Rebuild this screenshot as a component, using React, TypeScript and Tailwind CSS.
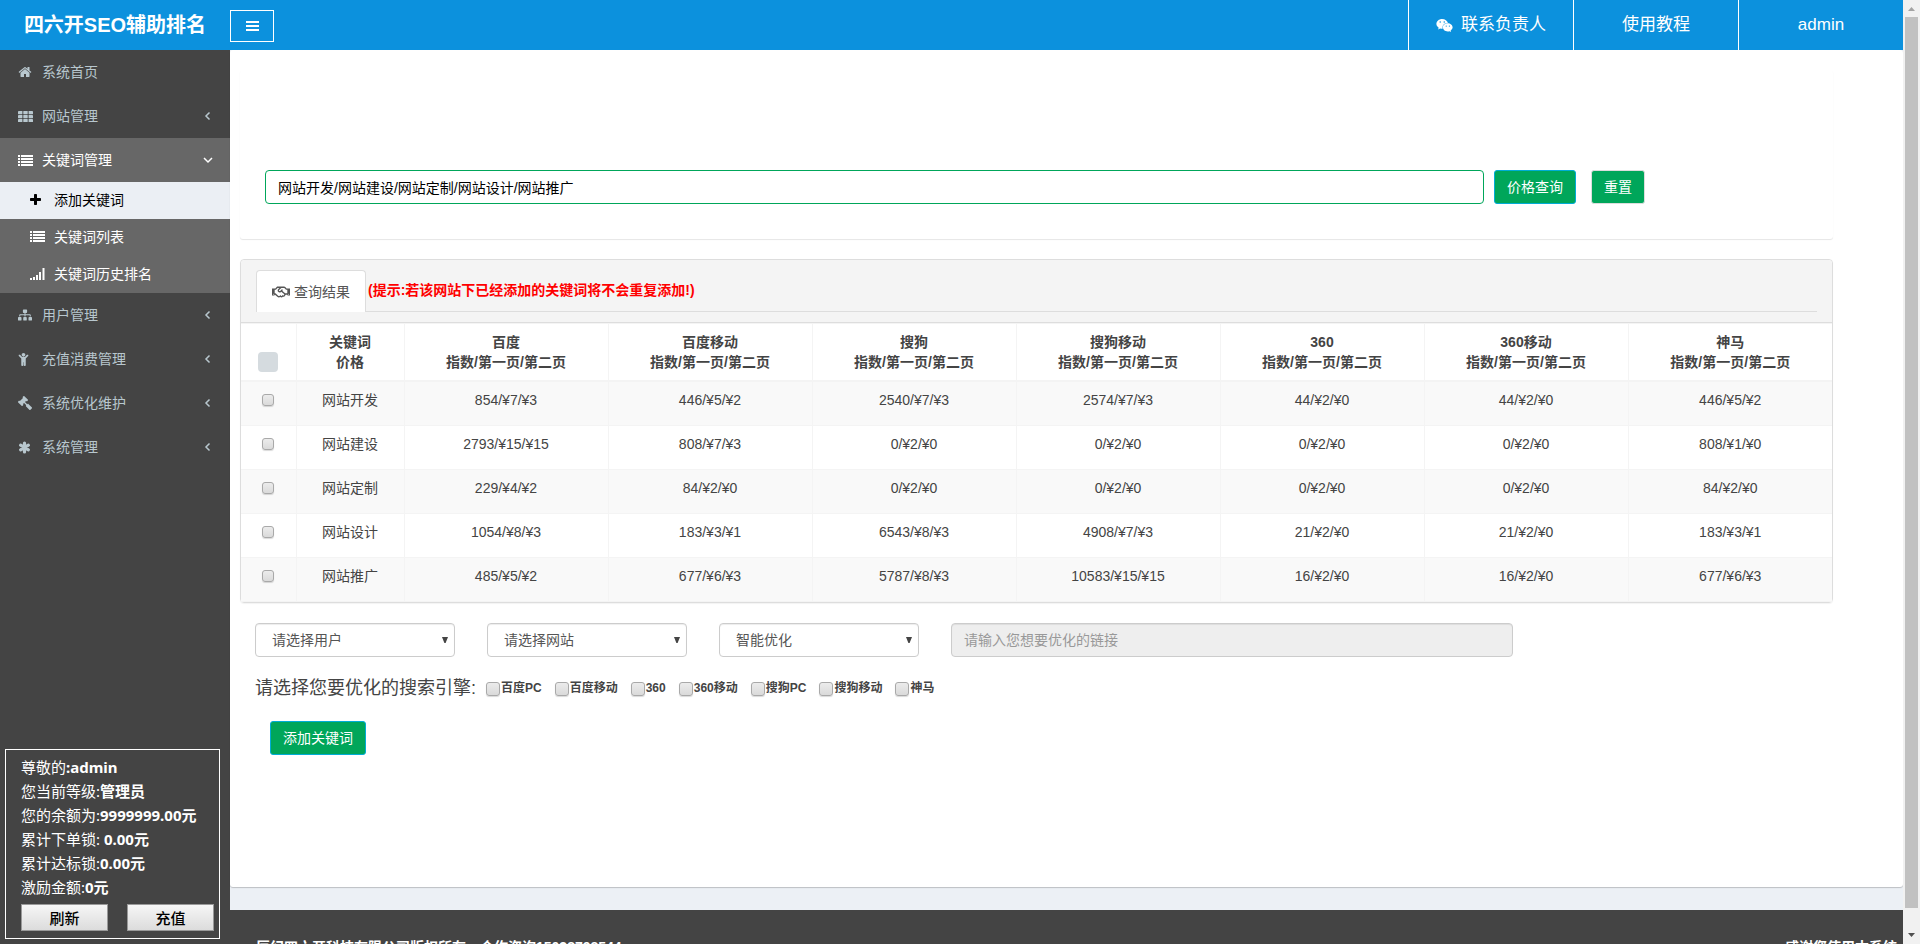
import { useState } from 'react'
import type { ReactNode } from 'react'
import { FaChild, FaGavel, FaRegHandshake, FaSitemap, FaWeixin } from 'react-icons/fa'

const columnas = ['百度', '百度移动', '搜狗', '搜狗移动', '360', '360移动', '神马']

const filas = [
  {
    palabra: '网站开发',
    precios: ['854/¥7/¥3', '446/¥5/¥2', '2540/¥7/¥3', '2574/¥7/¥3', '44/¥2/¥0', '44/¥2/¥0', '446/¥5/¥2'],
  },
  {
    palabra: '网站建设',
    precios: ['2793/¥15/¥15', '808/¥7/¥3', '0/¥2/¥0', '0/¥2/¥0', '0/¥2/¥0', '0/¥2/¥0', '808/¥1/¥0'],
  },
  {
    palabra: '网站定制',
    precios: ['229/¥4/¥2', '84/¥2/¥0', '0/¥2/¥0', '0/¥2/¥0', '0/¥2/¥0', '0/¥2/¥0', '84/¥2/¥0'],
  },
  {
    palabra: '网站设计',
    precios: ['1054/¥8/¥3', '183/¥3/¥1', '6543/¥8/¥3', '4908/¥7/¥3', '21/¥2/¥0', '21/¥2/¥0', '183/¥3/¥1'],
  },
  {
    palabra: '网站推广',
    precios: ['485/¥5/¥2', '677/¥6/¥3', '5787/¥8/¥3', '10583/¥15/¥15', '16/¥2/¥0', '16/¥2/¥0', '677/¥6/¥3'],
  },
]

const buscadores = ['百度PC', '百度移动', '360', '360移动', '搜狗PC', '搜狗移动', '神马']

const casilla =
  'appearance-none border border-[#a9a9a9] rounded-[3px] bg-linear-to-b from-[#ececec] to-[#dadada] shadow-[0_1px_1px_rgba(0,0,0,0.15)] checked:from-[#0c91dd] checked:to-[#0c91dd]'

function IconoCasa() {
  return (
    <svg width="14" height="14" viewBox="0 0 1792 1792" fill="currentColor">
      <path d="M1472 992v480q0 26-19 45t-45 19h-384v-384h-256v384h-384q-26 0-45-19t-19-45v-480q0-1 .5-3t.5-3l575-474 575 474q1 2 1 6zm223-69l-62 74q-8 9-21 11h-3q-13 0-21-7l-692-577-692 577q-12 8-24 7-13-2-21-11l-62-74q-8-10-7-23.5t11-21.5l719-599q32-26 76-26t76 26l244 204v-195q0-14 9-23t23-9h192q14 0 23 9t9 23v408l219 182q10 8 11 21.5t-7 23.5z" />
    </svg>
  )
}

function IconoCuadricula() {
  return (
    <svg width="15" height="11" viewBox="0 0 15 11" fill="currentColor">
      {[0, 4, 8].map((y) =>
        [0, 5.3, 10.6].map((x) => <rect key={`${x}-${y}`} x={x} y={y} width="4.4" height="3.2" rx="0.4" />)
      )}
    </svg>
  )
}

function IconoLista() {
  return (
    <svg width="15" height="11" viewBox="0 0 15 11" fill="currentColor">
      {[0, 3, 6, 9].map((y) => (
        <g key={y}>
          <rect x="0" y={y} width="2" height="2" />
          <rect x="3" y={y} width="12" height="2" />
        </g>
      ))}
    </svg>
  )
}

function IconoMas() {
  return (
    <svg width="11" height="11" viewBox="0 0 11 11" fill="currentColor">
      <rect x="0" y="4" width="11" height="3" rx="0.7" />
      <rect x="4" y="0" width="3" height="11" rx="0.7" />
    </svg>
  )
}

function IconoSenal() {
  return (
    <svg width="15" height="12" viewBox="0 0 15 12" fill="currentColor">
      <rect x="0" y="10" width="2" height="2" />
      <rect x="3" y="9" width="2" height="3" />
      <rect x="6" y="7" width="2" height="5" />
      <rect x="9" y="4" width="2" height="8" />
      <rect x="12.5" y="0" width="2" height="12" />
    </svg>
  )
}

function IconoAsterisco() {
  return (
    <svg width="13" height="13" viewBox="0 0 13 13" stroke="currentColor" strokeWidth="3.2" strokeLinecap="round">
      <path d="M6.5 2v9M2.6 4.2l7.8 4.6M10.4 4.2l-7.8 4.6" />
    </svg>
  )
}

function Flecha({ abierta = false }: { abierta?: boolean }) {
  return (
    <svg width="12" height="12" viewBox="0 0 12 12" fill="none" stroke="currentColor" strokeWidth="1.5">
      <path d={abierta ? 'M2 4l4 4 4-4' : 'M7.5 2.5L4 6l3.5 3.5'} />
    </svg>
  )
}

function ItemMenu({ icono, texto, flecha = true }: { icono: ReactNode; texto: string; flecha?: boolean }) {
  return (
    <li>
      <a href="#" className="flex items-center h-11 pl-[18px] pr-4 text-[#b8c7ce] hover:text-white">
        <span className="w-6">{icono}</span>
        <span className="flex-1">{texto}</span>
        {flecha && <Flecha />}
      </a>
    </li>
  )
}

function SubItem({ icono, texto, activo = false }: { icono: ReactNode; texto: string; activo?: boolean }) {
  return (
    <li>
      <a
        href="#"
        className={`flex items-center h-[37px] pb-[2px] pl-[30px] ${activo ? 'bg-[#ebeff4] text-black' : 'text-white'}`}
      >
        <span className="w-6">{icono}</span>
        {texto}
      </a>
    </li>
  )
}

function Selector({ etiqueta, opciones }: { etiqueta: string; opciones: string[] }) {
  return (
    <div className="relative w-[200px]">
      <select
        aria-label={etiqueta}
        className="appearance-none w-full h-[34px] pl-4 pr-6 border border-[#ccc] rounded bg-white text-[#555] shadow-[inset_0_1px_1px_rgba(0,0,0,0.075)]"
      >
        {opciones.map((opcion) => (
          <option key={opcion}>{opcion}</option>
        ))}
      </select>
      <svg
        className="absolute right-[7px] top-[14px] pointer-events-none"
        width="6"
        height="6"
        viewBox="0 0 6 6"
        fill="#444"
      >
        <path d="M0 0h6L3.6 6H2.4z" />
      </svg>
    </div>
  )
}

export default function App() {
  const [palabras, setPalabras] = useState('网站开发/网站建设/网站定制/网站设计/网站推广')
  const [marcadas, setMarcadas] = useState<string[]>([])

  const todas = marcadas.length === filas.length

  function alternar(palabra: string) {
    if (marcadas.includes(palabra)) {
      setMarcadas(marcadas.filter((p) => p !== palabra))
      return
    }

    setMarcadas([...marcadas, palabra])
  }

  return (
    <div className="flex h-screen overflow-hidden bg-[#444] text-sm text-[#444] font-['Liberation_Sans','Noto_Sans_CJK_SC',sans-serif]">
      <div className="flex flex-col flex-1 min-w-0">
        <header className="flex shrink-0 h-[50px] bg-[#0c91dd] text-white">
          <a href="#" className="w-[230px] text-center text-xl font-bold leading-[50px]">
            四六开SEO辅助排名
          </a>

          <button
            aria-label="菜单"
            className="flex items-center justify-center w-11 h-8 mt-[10px] border border-white"
          >
            <svg width="13" height="10" viewBox="0 0 13 10" fill="currentColor">
              <rect y="0" width="13" height="2" />
              <rect y="4" width="13" height="2" />
              <rect y="8" width="13" height="2" />
            </svg>
          </button>

          <nav className="flex ml-auto text-[17px]">
            <a href="#" className="flex items-center justify-center gap-2 w-[165px] border-l border-white">
              <FaWeixin size={17} />
              联系负责人
            </a>
            <a href="#" className="flex items-center justify-center w-[165px] border-l border-white">
              使用教程
            </a>
            <a href="#" className="flex items-center justify-center w-[165px] border-l border-white">
              admin
            </a>
          </nav>
        </header>

        <div className="flex flex-1 min-h-0">
          <aside className="flex flex-col shrink-0 w-[230px] bg-[#444]">
            <ul>
              <ItemMenu icono={<IconoCasa />} texto="系统首页" flecha={false} />
              <ItemMenu icono={<IconoCuadricula />} texto="网站管理" />

              <li className="bg-[#676767]">
                <a href="#" className="flex items-center h-11 pl-[18px] pr-4 text-white">
                  <span className="w-6">
                    <IconoLista />
                  </span>
                  <span className="flex-1">关键词管理</span>
                  <Flecha abierta />
                </a>

                <ul>
                  <SubItem icono={<IconoMas />} texto="添加关键词" activo />
                  <SubItem icono={<IconoLista />} texto="关键词列表" />
                  <SubItem icono={<IconoSenal />} texto="关键词历史排名" />
                </ul>
              </li>

              <ItemMenu icono={<FaSitemap size={14} />} texto="用户管理" />
              <ItemMenu icono={<FaChild size={13} className="-ml-px" />} texto="充值消费管理" />
              <ItemMenu icono={<FaGavel size={14} className="-scale-x-100" />} texto="系统优化维护" />
              <ItemMenu icono={<IconoAsterisco />} texto="系统管理" />
            </ul>

            <section className="mt-auto mb-[5px] ml-[5px] w-[215px] pt-[5px] pb-[7px] pl-[15px] pr-[5px] border border-white text-white text-[15px] leading-6 font-['Noto_Sans','Noto_Sans_CJK_SC',sans-serif]">
              <p>
                尊敬的<b>:admin</b>
              </p>
              <p>
                您当前等级:<b>管理员</b>
              </p>
              <p>
                您的余额为:<b>9999999.00元</b>
              </p>
              <p>
                累计下单锁: <b>0.00元</b>
              </p>
              <p>
                累计达标锁:<b>0.00元</b>
              </p>
              <p>
                激励金额:<b>0元</b>
              </p>

              <div className="flex justify-between mt-[5px] text-black font-medium">
                <button className="w-[87px] h-[27px] border border-[#999] bg-linear-to-b from-[#f6f6f6] to-[#dcdcdc] leading-6">
                  刷新
                </button>
                <button className="w-[87px] h-[27px] border border-[#999] bg-linear-to-b from-[#f6f6f6] to-[#dcdcdc] leading-6">
                  充值
                </button>
              </div>
            </section>
          </aside>

          <main className="flex-1 min-w-0 bg-[#ecf0f5]">
            <div className="min-h-[837px] pt-5 pl-[10px] pr-[70px] rounded-[3px] bg-white shadow-[0_1px_1px_rgba(0,0,0,0.2)]">
              <form
                className="flex items-start pt-[100px] pb-[35px] pl-[25px] rounded-[3px] shadow-[0_1px_1px_rgba(0,0,0,0.1)]"
                onSubmit={(e) => e.preventDefault()}
              >
                <input
                  type="text"
                  aria-label="关键词"
                  value={palabras}
                  onChange={(e) => setPalabras(e.target.value)}
                  className="flex-1 h-[34px] px-3 border border-[#00a65a] rounded bg-white text-black focus:outline-none"
                />
                <button className="ml-[10px] h-[34px] px-3 border border-[#00acd6] rounded-[3px] bg-[#00a65a] text-white">
                  价格查询
                </button>
                <button
                  type="button"
                  onClick={() => setPalabras('')}
                  className="ml-[15px] mr-[188px] h-[34px] px-3 border border-[#ddd] rounded-[3px] bg-[#00a65a] text-white"
                >
                  重置
                </button>
              </form>

              <section className="mt-5 border border-[#ddd] rounded shadow-[0_1px_1px_rgba(0,0,0,0.05)]">
                <div className="px-[15px] py-[10px] border-b border-[#ddd] rounded-t bg-[#f4f4f4]">
                  <div className="flex border-b border-[#ddd]">
                    <a
                      href="#"
                      className="flex items-center gap-1 h-[42px] -mb-px px-[15px] border border-b-0 border-[#ddd] rounded-t bg-white text-[#555]"
                    >
                      <FaRegHandshake size={18} />
                      查询结果
                    </a>
                    <b className="ml-[2px] leading-10 text-[#f00]">
                      (提示:若该网站下已经添加的关键词将不会重复添加!)
                    </b>
                  </div>
                </div>

                <div className="border-t border-[#f4f4f4]">
                  <table className="w-full table-fixed border-collapse text-center leading-5">
                    <thead>
                      <tr className="border-b-2 border-[#f4f4f4]">
                        <th className="w-[55px] p-2 align-bottom">
                          <input
                            type="checkbox"
                            aria-label="全选"
                            checked={todas}
                            onChange={() => setMarcadas(todas ? [] : filas.map((f) => f.palabra))}
                            className="block mx-auto size-5 appearance-none rounded bg-[#d5dbdf] checked:bg-[#0c91dd]"
                          />
                        </th>
                        <th className="w-[108px] p-2 border-l border-[#f4f4f4]">
                          关键词
                          <br />
                          价格
                        </th>
                        {columnas.map((columna) => (
                          <th key={columna} className="p-2 border-l border-[#f4f4f4]">
                            {columna}
                            <br />
                            指数/第一页/第二页
                          </th>
                        ))}
                      </tr>
                    </thead>
                    <tbody>
                      {filas.map((fila) => (
                        <tr key={fila.palabra} className="h-11 align-top border-b border-[#f4f4f4] odd:bg-[#f9f9f9]">
                          <td className="px-2 py-3">
                            <input
                              type="checkbox"
                              aria-label={fila.palabra}
                              checked={marcadas.includes(fila.palabra)}
                              onChange={() => alternar(fila.palabra)}
                              className={`block mx-auto size-3 ${casilla}`}
                            />
                          </td>
                          <td className="p-2 border-l border-[#f4f4f4]">{fila.palabra}</td>
                          {fila.precios.map((precio, i) => (
                            <td key={columnas[i]} className="p-2 border-l border-[#f4f4f4]">
                              {precio}
                            </td>
                          ))}
                        </tr>
                      ))}
                    </tbody>
                  </table>
                </div>
              </section>

              <div className="flex gap-8 mt-5 pl-[15px]">
                <Selector etiqueta="用户" opciones={['请选择用户']} />
                <Selector etiqueta="网站" opciones={['请选择网站']} />
                <Selector etiqueta="优化方式" opciones={['智能优化']} />
                <input
                  type="text"
                  aria-label="链接"
                  disabled
                  placeholder="请输入您想要优化的链接"
                  className="w-[562px] h-[34px] px-3 border border-[#ccc] rounded bg-[#eee] placeholder:text-[#999] shadow-[inset_0_1px_1px_rgba(0,0,0,0.075)]"
                />
              </div>

              <div className="flex items-center mt-4 pl-[15px] leading-[30px]">
                <h4 className="mr-[10px] text-lg leading-[30px]">请选择您要优化的搜索引擎:</h4>
                <div className="flex gap-[13px]">
                  {buscadores.map((buscador) => (
                    <label key={buscador} className="flex items-center gap-px text-xs leading-[30px] font-bold">
                      <input type="checkbox" className={`size-[14px] mt-[2px] ${casilla}`} />
                      {buscador}
                    </label>
                  ))}
                </div>
              </div>

              <button className="block mt-[18px] ml-[30px] h-[34px] px-3 border border-[#00acd6] rounded-[3px] bg-[#00a65a] text-white">
                添加关键词
              </button>
            </div>

            <footer className="flex justify-between mt-[23px] pt-[27px] pl-[26px] pr-[6px] bg-[#444] text-white font-bold leading-5">
              <span>辰纪四六开科技有限公司版权所有，合作咨询15038798544</span>
              <span>感谢您使用本系统</span>
            </footer>
          </main>
        </div>
      </div>

      {/* barra de desplazamiento */}
      <div className="flex flex-col items-center justify-between shrink-0 w-[17px] bg-[#f1f1f1]">
        <svg className="shrink-0" width="17" height="17" viewBox="0 0 17 17" fill="#a3a3a3">
          <path d="M5 11l3.5-4 3.5 4z" />
        </svg>
        <div className="flex-1 w-[13px] mb-[19px] bg-[#c1c1c1]" />
        <svg className="shrink-0" width="17" height="17" viewBox="0 0 17 17" fill="#505050">
          <path d="M5 6l3.5 4L12 6z" />
        </svg>
      </div>
    </div>
  )
}
